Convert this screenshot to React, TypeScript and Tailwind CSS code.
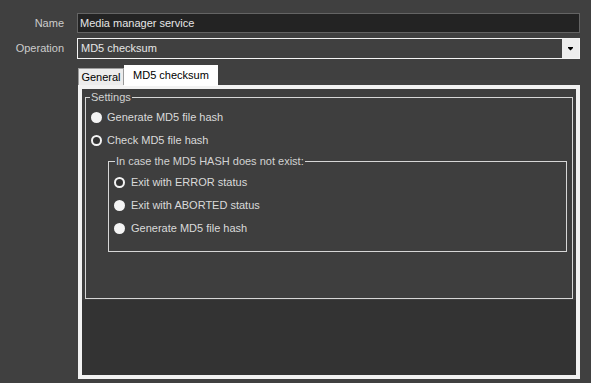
import React from "react";

interface RadioProps {
  label: string;
  ring?: boolean;
  gap?: string;
}

function Radio({ label, ring, gap = "gap-[5px]" }: RadioProps) {
  return (
    <div className={`flex items-center h-[23px] ${gap}`}>
      {ring ? (
        <span className="w-[11px] h-[11px] rounded-full border-2 border-[#f4f4f4] bg-[#333333] shrink-0" />
      ) : (
        <span className="w-[11px] h-[11px] rounded-full bg-[#f4f4f4] shrink-0" />
      )}
      <span className="text-[#dadada] whitespace-nowrap">{label}</span>
    </div>
  );
}

export default function App() {
  return (
    <div className="w-[591px] h-[383px] bg-[#404040] overflow-hidden font-['Liberation_Sans',Arial,sans-serif] text-[11px] pt-[13px]">
      {/* Name */}
      <div className="flex items-center">
        <label className="w-[64px] text-right text-[#cccccc]">Name</label>
        <div className="ml-[13px] w-[503px] h-[20px] border border-[#646464] bg-[#232323] text-[#e6e6e6] px-[2px] flex items-center">
          Media manager service
        </div>
      </div>

      {/* Operation */}
      <div className="flex items-center mt-[5px]">
        <label className="w-[64px] text-right text-[#cccccc]">Operation</label>
        <div className="ml-[13px] w-[503px] h-[21px] border border-[#f4f4f4] bg-[#404040] flex items-stretch">
          <span className="flex-1 flex items-center pl-[3px] text-[#e6e6e6]">MD5 checksum</span>
          <span className="w-[17px] bg-[#ededed] flex items-center justify-center">
            <svg width="5" height="4" viewBox="0 0 5 4">
              <path d="M0 0h5v1H0zM0 1h5L2.5 3.5z" fill="#000" />
            </svg>
          </span>
        </div>
      </div>

      {/* Tabs */}
      <div className="ml-[78px] mt-[6px] flex items-end h-[20px]">
        <div className="w-[46px] h-[17px] border border-b-0 border-[#9a9a9a] bg-[#ececec] text-black flex items-center justify-center">
          General
        </div>
        <div className="w-[94px] h-[21px] -mb-px bg-white text-black flex items-center justify-center">
          MD5 checksum
        </div>
      </div>

      {/* Tab page */}
      <div className="ml-[78px] w-[502px] h-[294px] border-4 border-[#f2f2f2] flex flex-col">
        <div className="bg-[#3e3e3e] pt-[1px] pl-[3px] pb-[1px]">
          <fieldset className="w-[488px] border border-[#d6d6d6] m-0 p-0">
            <legend className="ml-[4px] px-[1px] leading-[14px] text-[#d2d2d2]">Settings</legend>
            <div className="pt-[2px] pl-[5px] pb-[46px]">
              <Radio label="Generate MD5 file hash" />
              <Radio label="Check MD5 file hash" ring />
              <fieldset className="ml-[17px] mt-[2px] w-[459px] border border-[#d6d6d6] m-0 p-0">
                <legend className="ml-[6px] px-[1px] leading-[14px] text-[#d2d2d2]">
                  In case the MD5 HASH does not exist:
                </legend>
                <div className="pt-[3px] pl-[5px] pb-[11px]">
                  <Radio label="Exit with ERROR status" ring gap="gap-[6px]" />
                  <Radio label="Exit with ABORTED status" gap="gap-[6px]" />
                  <Radio label="Generate MD5 file hash" gap="gap-[6px]" />
                </div>
              </fieldset>
            </div>
          </fieldset>
        </div>
        <div className="flex-1 bg-[#333333]" />
      </div>
    </div>
  );
}
